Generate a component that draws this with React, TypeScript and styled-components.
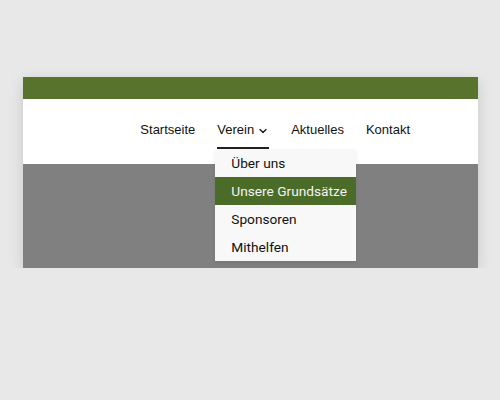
import styled, { createGlobalStyle } from 'styled-components';
import { ChevronDown } from 'lucide-react';

const GlobalStyle = createGlobalStyle`
    body {
        margin: 0;
        background: #e8e8e8;
        font-family: "Liberation Sans", Arial, sans-serif;
    }
`
const Frame = styled.div`
    width: 455px;
    margin: 77px 0 0 23px;
    box-shadow: 0 4px 14px rgba(0, 0, 0, 0.14);
`
const TopBar = styled.div`
    height: 22px;
    background: #58732d;
`
const NavBar = styled.nav`
    height: 65px;
    background: #fff;
    display: flex;
    justify-content: flex-end;
    align-items: flex-start;
    gap: 22px;
    padding: 21px 68px 0 0;
    box-sizing: border-box;
    position: relative;
    z-index: 2;
`
const NavItem = styled.div`
    position: relative;
`
const NavLink = styled.a<{ $active?: boolean }>`
    display: flex;
    align-items: center;
    font-family: "Liberation Sans", Arial, sans-serif;
    font-size: 13px;
    line-height: 20px;
    color: #111;
    text-decoration: none;
    padding-bottom: 7px;
    border-bottom: 2px solid ${(p) => (p.$active ? '#222' : 'transparent')};
    cursor: pointer;
    svg {
        margin-left: 3px;
        margin-top: 1px;
    }
`
const Dropdown = styled.ul`
    position: absolute;
    top: 100%;
    left: -2px;
    width: 141px;
    margin: 0;
    padding: 0;
    list-style: none;
    background: #f8f8f8;
    box-shadow: 0 2px 4px rgba(0, 0, 0, 0.08);
`
const DropItem = styled.li<{ $selected?: boolean }>`
    height: 28px;
    line-height: 28px;
    padding-left: 16px;
    font-family: Roboto, "Liberation Sans", sans-serif;
    font-size: 13.7px;
    color: ${(p) => (p.$selected ? '#f4f4f4' : '#111')};
    background: ${(p) => (p.$selected ? '#4b6b28' : 'transparent')};
    white-space: nowrap;
`
const Hero = styled.div`
    height: 104px;
    background: #808080;
`

const subItems = ['Über uns', 'Unsere Grundsätze', 'Sponsoren', 'Mithelfen'];

const App = (): JSX.Element => {
    return (
        <>
            <GlobalStyle />
            <Frame>
                <TopBar />
                <NavBar>
                    <NavItem>
                        <NavLink>Startseite</NavLink>
                    </NavItem>
                    <NavItem>
                        <NavLink $active>
                            Verein<ChevronDown size={12} strokeWidth={2.5} />
                        </NavLink>
                        <Dropdown>
                            {subItems.map((item) => (
                                <DropItem key={item} $selected={item === 'Unsere Grundsätze'}>
                                    {item}
                                </DropItem>
                            ))}
                        </Dropdown>
                    </NavItem>
                    <NavItem>
                        <NavLink>Aktuelles</NavLink>
                    </NavItem>
                    <NavItem>
                        <NavLink>Kontakt</NavLink>
                    </NavItem>
                </NavBar>
                <Hero />
            </Frame>
        </>
    )
}
export default App;
